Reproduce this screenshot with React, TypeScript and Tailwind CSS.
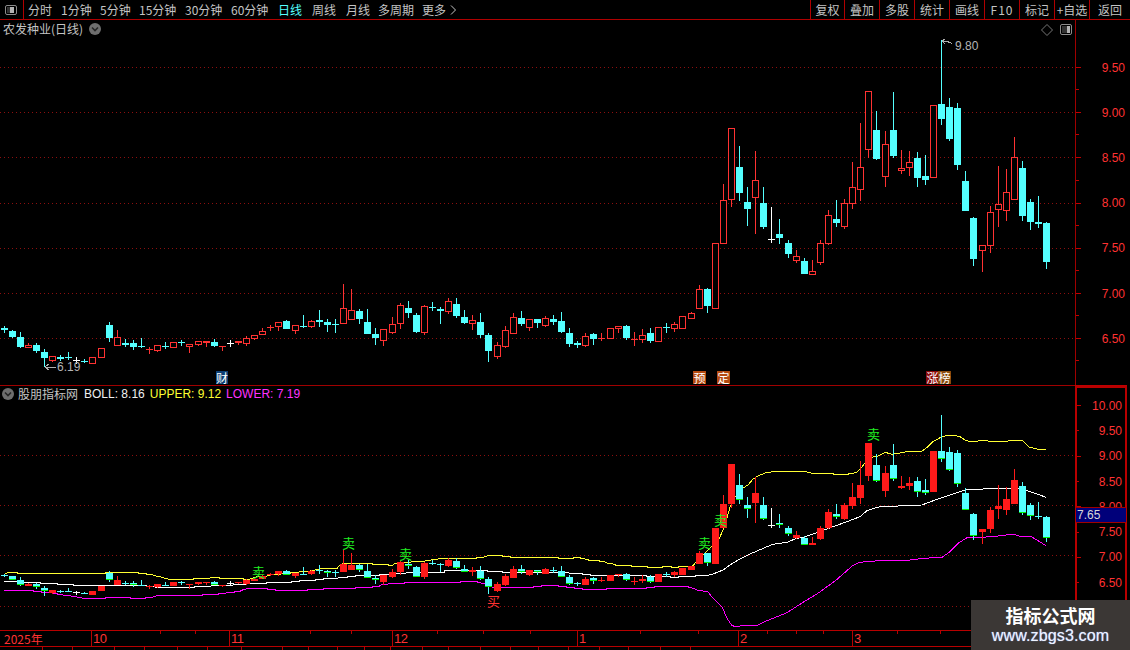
const CJK = "font-['Noto_Sans_CJK_SC','Liberation_Sans',sans-serif]";
const LAT = "font-['Liberation_Sans','Noto_Sans_CJK_SC',sans-serif]";

// x, kind (r red, c cyan, w white), bodyTop, bodyBottom, wickTop, wickBottom (pixels of the upper chart)
type C = [number, string, number, number, number, number];
const candles: C[] = [
  [4,'c',328,330,326,333],[12,'c',331,337,330,338],[20,'c',337,347,332,348],[28,'r',345,348,343,348],[36,'c',345,351,343,353],
  [44,'c',352,358,349,367],[52,'r',356,361,356,362],[60,'c',357,359,355,361],[68,'c',357,358,352,360],[76,'w',360,361,357,364],
  [84,'c',361,362,359,363],[92,'r',357,364,357,364],[101,'r',348,358,348,358],[109,'c',325,338,322,342],[117,'r',337,346,330,346],
  [125,'c',343,345,339,347],[133,'c',343,347,340,350],[141,'c',346,347,338,348],[149,'r',349,350,347,354],[157,'r',345,351,345,352],
  [165,'c',346,347,342,349],[173,'r',342,348,342,348],[181,'c',342,343,340,346],[189,'r',344,347,344,353],[198,'r',341,345,341,346],
  [206,'r',341,343,341,347],[214,'c',342,346,339,347],[222,'r',346,347,346,351],[230,'w',343,344,340,347],[238,'r',341,343,341,345],
  [246,'r',338,344,336,346],[254,'r',335,339,335,340],[262,'r',331,335,328,335],[270,'r',327,328,325,331],[278,'r',322,327,322,331],
  [286,'c',321,329,320,329],[295,'r',325,331,325,334],[303,'c',326,327,315,328],[311,'r',321,327,320,328],[319,'c',320,322,310,327],
  [327,'c',322,325,319,332],[335,'c',324,325,319,333],[343,'r',308,324,284,324],[351,'r',310,320,289,320],[359,'c',311,319,309,324],
  [367,'c',322,334,309,334],[375,'c',334,338,328,345],[383,'r',329,341,329,346],[392,'r',324,333,317,334],[400,'r',305,324,303,329],
  [408,'c',308,313,301,318],[416,'c',315,332,313,333],[424,'r',306,333,305,335],[432,'c',307,308,302,311],[440,'c',309,311,307,324],
  [448,'r',301,312,298,314],[456,'c',304,316,298,318],[464,'c',317,323,310,324],[472,'r',320,324,315,330],[480,'c',322,335,313,338],
  [488,'c',335,351,333,362],[497,'r',345,357,342,359],[505,'r',330,347,326,348],[513,'r',317,334,313,334],[521,'c',318,324,311,326],
  [529,'r',319,328,319,331],[537,'c',319,323,319,328],[545,'r',318,326,316,327],[553,'c',319,322,315,325],[561,'c',321,332,312,333],
  [569,'c',333,344,328,347],[577,'c',343,345,341,348],[585,'r',336,346,333,347],[593,'c',334,339,333,345],[601,'r',338,339,333,341],
  [610,'r',328,339,328,339],[618,'r',326,329,326,333],[626,'c',326,338,325,340],[634,'r',339,340,332,346],[642,'r',335,340,329,343],
  [650,'c',333,341,328,343],[658,'r',327,342,327,342],[666,'c',327,328,323,333],[674,'r',324,329,322,332],[682,'r',316,329,316,329],
  [691,'r',313,319,312,319],[699,'r',289,309,285,309],[707,'c',289,306,288,313],[715,'r',243,309,243,309],[723,'r',200,244,184,244],
  [731,'r',128,200,128,207],[739,'c',167,193,146,201],[747,'c',202,209,187,226],[755,'r',180,198,151,234],[763,'c',203,227,187,229],
  [771,'w',239,240,207,243],[779,'c',234,238,219,244],[788,'c',243,254,240,258],[796,'r',256,261,250,263],[804,'c',261,274,258,274],
  [812,'r',271,275,260,275],[820,'r',243,263,240,265],[828,'r',215,244,210,245],[836,'c',219,223,200,227],[844,'r',203,227,199,229],
  [852,'r',187,204,162,209],[860,'r',167,190,123,201],[868,'r',91,150,91,158],[876,'c',130,159,111,160],[885,'r',144,177,131,187],
  [893,'c',130,156,92,158],[901,'r',168,171,150,174],[909,'r',162,168,151,176],[917,'c',158,178,152,187],[925,'c',176,180,155,185],
  [933,'r',105,178,105,178],[941,'c',104,119,40,125],[949,'c',107,139,98,141],[957,'c',108,165,103,170],[965,'c',181,211,171,211],
  [973,'c',218,259,217,266],[982,'r',245,251,245,272],[990,'r',212,246,206,253],[998,'r',204,210,166,227],[1006,'r',192,211,169,221],
  [1014,'r',157,200,137,200],[1022,'c',168,216,161,221],[1030,'c',202,222,199,230],[1038,'c',222,224,196,228],[1046,'c',223,262,222,269],
];

const yellow = "5,574 8,572.5 17,572.5 17,573.5 105,573.5 105,572.5 138,572.5 138,573.5 146,573.5 146,574.5 152,574.5 156,576 160,576.5 164,578 170,579.5 193,579.5 194,578 210,578 211,577 219,577 219,578 243,578 243,579 250,579 258,576.5 267,576 273,574.5 290,573.5 291,572.5 307,571.5 315,570 323,568.5 337,568.5 340,565 343,563.3 372,563.3 372,564.3 388,564.3 388,565.3 393,565.3 395,563.3 403,562.3 420,561.7 427,560.7 436,559.3 444,558.3 476,558.3 476,557.3 484,557.3 485,556.3 493,555.3 502,555.3 503,556.3 510,556.3 511,557.3 558,557.3 558,558.3 573,558.3 573,557.3 580,557.3 581,558.3 584,558.3 585,559.3 590,560.3 599,560.3 600,561.3 605,562 608,563.3 615,564.3 615,565.3 631,565.3 631,566.3 647,566.3 647,567.3 662,567.3 662,566.3 671,566.3 671,567.3 678,567.3 678,566.3 692,566.3 695,563.3 698,560 719,539 723,530 727,518 730,507 735,497 743,488 748,485 753,479 758,476 765,473 777,471 800,471 807,472 811,473 833,473 833,474 848,474 848,473 854,473 857,472 862,467 865,463 873,457 877,456.7 885,452.3 892,454.3 898,453.3 907,451.7 922,451 928,446.7 933,441.7 940,437.7 948,435 953,435 960,436.7 965,440 970,441.7 978,441 987,440 988,441 1008,441 1010,440 1022,440 1030,447.7 1035,448.3 1038,449.3 1046,449.3";
const white = "4,581.3 16,581.3 17,582 33,582 33,582.7 40,582.7 41,583.3 57,583.3 57,584.3 73,584.3 73,585.3 146,585.3 146,586.7 163,587.3 194,587.3 194,586 211,586 218,585.3 233,585.3 234,584.3 243,584.3 250,583.7 266,583.7 267,582.3 291,582.3 291,581.3 299,581.3 299,580.3 315,580.3 315,579.3 323,579.3 323,578.3 338,578.3 339,577.3 347,577.3 347,576.3 355,576.3 355,575.3 379,575.3 379,574.3 389,574.3 403,573.3 413,572.3 444,572.3 444,570.3 453,570.3 502,571.3 502,572.3 558,572.3 574,573.3 582,573.3 582,574.3 590,574.3 590,575.3 670,576.3 670,577.3 678,577.3 678,576.3 695,576.3 695,575.3 708,575.3 713,574 723,570 730,565 737,560.7 750,554 767,546.7 773,544.3 787,542.3 795,539 805,536.7 820,531.7 833,526.7 847,521.7 860,516.7 867,510.7 877,507.5 883,506 890,506.7 907,505.3 922,505 928,502.7 940,498.3 950,495 957,492.7 965,490 973,489.3 1007,488.3 1020,488.3 1030,491.7 1037,494 1046,497.3";
const magenta = "4,590.3 33,590.3 33,591.3 41,591.3 41,592.3 57,593.3 57,594.3 65,595.3 73,596.3 79,597.3 83,598.3 105,598.3 105,597.3 130,597.3 131,598.3 145,598.3 145,597.3 153,597.3 154,596.3 161,595.3 202,595.3 202,594.3 218,594.3 218,593.3 226,593.3 227,592.3 234,592.3 234,591.3 240,591.3 244,589.3 250,588.3 267,588.3 267,589.3 275,589.3 276,590.3 307,590.3 307,589.3 323,589.3 323,588.3 355,588.3 355,587.3 372,587.3 372,586.3 379,586.3 379,585.3 387,584.3 390,583.3 404,583.3 404,582.3 460,582.3 460,581.3 477,581.3 477,582.3 483,583.3 493,587.3 533,587.3 533,586.3 541,586.3 541,585.3 558,585.3 558,586.3 566,586.3 566,587.3 574,587.3 574,588.3 582,588.3 582,589.3 606,589.3 606,588.3 646,588.3 646,587.3 654,587.3 654,586.3 686,586.3 693,588.3 698,590.3 708,591.7 713,598.3 722,606.7 727,618.3 732,625.7 737,626.7 743,625.3 757,625.3 767,620.7 787,612.7 803,602.3 820,592 837,579.3 853,565.3 860,562.3 870,561.3 880,560.7 888,561 910,560 923,558.3 942,557.3 950,551.7 958,543.3 967,537.7 980,537.3 993,536.7 1003,535.3 1013,534.3 1022,536.7 1032,537 1038,540.7 1046,545.7";

const RED = '#ff3232';
const CYAN = '#54ffff';
const toLower = (y: number) => Math.round(555.3 + (y - 293) * 0.554);

function Dots({ ys }: { ys: number[] }) {
  return (
    <g shapeRendering="auto">
      {ys.map((y) => (
        <line key={y} x1={0} x2={1075} y1={y + 0.5} y2={y + 0.5} stroke="#8c0f0f" strokeDasharray="1 3" />
      ))}
    </g>
  );
}

function UpperChart() {
  return (
    <svg width={1075} height={365} viewBox="0 20 1075 365" shapeRendering="crispEdges" className="block shrink-0">
      <Dots ys={[67, 112, 157, 203, 248, 293, 338]} />
      {candles.map(([x, k, t, b, wt, wb]) => {
        const col = k === 'r' ? RED : k === 'c' ? CYAN : '#ffffff';
        const flat = b - t <= 1;
        return (
          <g key={x}>
            <rect x={x} y={wt} width={1} height={wb - wt} fill={col} />
            {flat ? (
              <rect x={x - 3} y={t} width={7} height={1} fill={col} />
            ) : k === 'r' ? (
              <rect x={x - 2.5} y={t + 0.5} width={6} height={b - t - 1} fill="#000" stroke={col} />
            ) : (
              <rect x={x - 3} y={t} width={7} height={b - t} fill={col} />
            )}
          </g>
        );
      })}
      <polyline points="942,41 946,41 952,43.5" fill="none" stroke="#b0b0b0" />
      <polyline points="945,39 942,41 945,44" fill="none" stroke="#b0b0b0" />
      <polyline points="45,367 56,367" fill="none" stroke="#b0b0b0" />
      <polyline points="49,364 45,367 49,370" fill="none" stroke="#b0b0b0" />
    </svg>
  );
}

function LowerChart() {
  return (
    <svg width={1075} height={244} viewBox="0 386 1075 244" shapeRendering="crispEdges" className="block shrink-0">
      <Dots ys={[455, 505, 555, 606]} />
      <polyline points={yellow} fill="none" stroke="#ffff32" />
      <polyline points={white} fill="none" stroke="#ffffff" />
      <polyline points={magenta} fill="none" stroke="#ff00ff" />
      {candles.map(([x, k, t, b, wt, wb]) => {
        const col = k === 'r' ? '#ff1a1a' : k === 'c' ? CYAN : '#ffffff';
        const lt = toLower(t);
        const lb = Math.max(toLower(b), lt + 1);
        return (
          <g key={x}>
            <rect x={x} y={toLower(wt)} width={1} height={toLower(wb) - toLower(wt)} fill={col} />
            <rect x={x - 3} y={lt} width={7} height={lb - lt} fill={col} />
            {k === 'c' && lb - lt > 1 && <rect x={x - 3} y={lb - 1} width={7} height={1} fill="#00f000" />}
          </g>
        );
      })}
    </svg>
  );
}

function Round({ className = '' }: { className?: string }) {
  return (
    <svg width={12} height={12} viewBox="0 0 12 12" className={className}>
      <circle cx={6} cy={6} r={6} fill="#6e6e6e" />
      <polyline points="3,4.5 6,7.5 9,4.5" fill="none" stroke="#262626" strokeWidth={1.6} />
    </svg>
  );
}

function ToggleIcon({ left }: { left?: boolean }) {
  return (
    <svg width={12} height={left ? 10 : 11} viewBox={left ? '0 0 12 10' : '0 0 12 11'}>
      <rect x={0.5} y={0.5} width={11} height={left ? 9 : 10} rx={1.5} fill="#000" stroke="#8c8c8c" />
      <rect x={2} y={2} width={left ? 3 : 5} height={left ? 6 : 7} fill="#333" />
      <rect x={left ? 5 : 7} y={2} width={left ? 4 : 3} height={left ? 6 : 7} fill="#b4b4b4" />
    </svg>
  );
}

const leftTabs: [string, string][] = [
  ['分时', 'w-[33px]'], ['1分钟', 'w-[39px]'], ['5分钟', 'w-[39px]'], ['15分钟', 'w-[46px]'], ['30分钟', 'w-[46px]'],
  ['60分钟', 'w-[47px]'], ['日线', 'w-[34px]'], ['周线', 'w-[34px]'], ['月线', 'w-[32px]'], ['多周期', 'w-[44px]'],
];
const rightTabs: [string, string][] = [
  ['复权', 'w-[34px]'], ['叠加', 'w-[35px]'], ['多股', 'w-[35px]'], ['统计', 'w-[35px]'], ['画线', 'w-[35px]'],
  ['F10', 'w-[35px] tracking-[1px]'], ['标记', 'w-[35px]'], ['+自选', 'w-[35px]'], ['返回', 'w-[41px]'],
];

const upperAxis = ['9.50', '9.00', '8.50', '8.00', '7.50', '7.00', '6.50'];
const lowerAxis = ['10.00', '9.50', '9.00', '8.50', '8.00', '7.50', '7.00', '6.50'];

function UpperRow({ label }: { label: string }) {
  return (
    <div className="relative flex h-[45.2px] items-center">
      <span className="h-px w-[5px] bg-[#c00000]" />
      <span className={`ml-auto mr-[5px] text-[12px] leading-none text-[#ff3232] ${LAT}`}>{label}</span>
      <span className="absolute bottom-0 left-0 h-px w-[3px] bg-[#c00000]" />
    </div>
  );
}

function LowerRow({ label, major }: { label: string; major: boolean }) {
  return (
    <div className="flex h-[25.3px] items-center">
      <span className={`h-px bg-[#c00000] ${major ? 'w-[4px]' : 'w-[2px]'}`} />
      <span className={`ml-auto mr-[3px] text-[12px] leading-none text-[#ff3232] ${LAT}`}>{label}</span>
    </div>
  );
}

const months: [string, string][] = [
  ['2025年', 'w-[91px] pl-[4px]'], ['10', 'w-[138px] border-l border-[#b80000] pl-[1px]'], ['11', 'w-[163px] border-l border-[#b80000] pl-[1px]'],
  ['12', 'w-[185px] border-l border-[#b80000] pl-[1px]'], ['1', 'w-[161px] border-l border-[#b80000] pl-[1px]'],
  ['2', 'w-[114px] border-l border-[#b80000] pl-[1px]'], ['3', 'flex-1 border-l border-[#b80000] pl-[1px]'],
];
const footerCells = ['w-[43px]', 'w-[30px]', 'w-[42px]', 'w-[30px]', 'w-[33px]', 'w-[30px]', 'w-[34px]', 'w-[41px]', 'w-[26px]', 'w-[29px]', 'w-[27px]', 'w-[26px]', 'w-[32px]', 'w-[26px]', 'w-[32px]', 'w-[30px]', 'w-[28px]', 'w-[30px]', 'w-[31px]', 'w-[29px]', 'w-[32px]', 'w-[30px]'];

export default function App() {
  return (
    <div className={`relative flex h-[650px] w-[1130px] flex-col overflow-hidden bg-black ${CJK}`}>
      {/* toolbar */}
      <div className="flex h-[20px] shrink-0 items-stretch border-b border-[#b00000] text-[12px] leading-none text-[#c4c4c4]">
        <div className="flex w-[24px] items-center justify-center border-r border-[#b00000] pr-[1px]">
          <ToggleIcon left />
        </div>
        <div className="flex items-center pl-[4px]">
          {leftTabs.map(([t, w]) => (
            <span key={t} className={`${w} ${t === '日线' ? 'text-[#54ffff]' : ''}`}>{t}</span>
          ))}
          <span className="flex items-center">
            更多
            <svg width={7} height={10} viewBox="0 0 7 10" className="ml-[4px]">
              <polyline points="1,0.5 5.5,5 1,9.5" fill="none" stroke="#c4c4c4" />
            </svg>
          </span>
        </div>
        <div className="ml-auto flex">
          {rightTabs.map(([t, w]) => (
            <span key={t} className={`flex items-center justify-center border-l border-[#b00000] ${w}`}>{t}</span>
          ))}
        </div>
      </div>

      {/* upper panel */}
      <div className="relative flex h-[365px] shrink-0">
        <UpperChart />
        <div className="flex-1 border-l border-[#a00000] pt-[25px]">
          {upperAxis.map((l) => (
            <UpperRow key={l} label={l} />
          ))}
        </div>
        <div className="absolute left-[3px] top-[2px] flex items-center text-[12px] leading-[14px] text-[#c4c4c4]">
          农发种业(日线)
          <Round className="ml-[6px]" />
        </div>
        <svg width={12} height={12} viewBox="0 0 12 12" className="absolute left-[1041px] top-[4px]">
          <polygon points="6,0.5 11.5,6 6,11.5 0.5,6" fill="none" stroke="#777" />
        </svg>
        <div className="absolute left-[1060px] top-[4px]">
          <ToggleIcon />
        </div>
        <span className={`absolute left-[955px] top-[19px] text-[12px] leading-[14px] text-[#b4b4b4] ${LAT}`}>9.80</span>
        <span className={`absolute left-[57px] top-[340px] text-[12px] leading-[14px] text-[#b4b4b4] ${LAT}`}>6.19</span>
        <span className="absolute left-[216px] top-[351px] h-[13px] w-[12px] bg-[#0c3f75] text-center text-[12px] leading-[13px] text-white">财</span>
        <span className="absolute left-[693px] top-[351px] h-[13px] w-[13px] bg-[#b44a10] text-center text-[12px] leading-[13px] text-white">预</span>
        <span className="absolute left-[717px] top-[351px] h-[13px] w-[13px] bg-[#b44a10] text-center text-[12px] leading-[13px] text-white">定</span>
        <span className="absolute left-[926px] top-[351px] h-[13px] w-[13px] bg-[#8a0a0a] text-center text-[12px] leading-[13px] text-white">涨</span>
        <span className="absolute left-[938px] top-[351px] h-[13px] w-[13px] bg-[#8a4a0c] text-center text-[12px] leading-[13px] text-white">榜</span>
      </div>

      {/* divider */}
      <div className="flex h-px shrink-0">
        <div className="w-[1075px] bg-[#a00000]" />
        <div className="w-[52px] bg-[#c00000]" />
      </div>

      {/* lower panel */}
      <div className="relative flex h-[244px] shrink-0">
        <LowerChart />
        <div className="h-full w-[52px] border-x-2 border-t-2 border-[#b80000] pt-[5px]">
          {lowerAxis.map((l, i) => (
            <LowerRow key={l} label={l} major={i % 2 === 0} />
          ))}
        </div>
        <div className="absolute left-[2px] top-[1px] flex items-center text-[12px] leading-[14px]">
          <Round className="mr-[4px]" />
          <span className="text-[#c4c4c4]">股朋指标网</span>
          <span className={`ml-[6px] text-[#f0f0f0] ${LAT}`}>BOLL: 8.16</span>
          <span className={`ml-[5px] text-[#ffff32] ${LAT}`}>UPPER: 9.12</span>
          <span className={`ml-[5px] text-[#ff32ff] ${LAT}`}>LOWER: 7.19</span>
        </div>
        <span className="absolute left-[252px] top-[179px] text-[13px] leading-[13px] text-[#22f022]">卖</span>
        <span className="absolute left-[342px] top-[150px] text-[13px] leading-[13px] text-[#22f022]">卖</span>
        <span className="absolute left-[399px] top-[161px] text-[13px] leading-[13px] text-[#22f022]">卖</span>
        <span className="absolute left-[698px] top-[150px] text-[13px] leading-[13px] text-[#22f022]">卖</span>
        <span className="absolute left-[714px] top-[127px] text-[13px] leading-[13px] text-[#22f022]">卖</span>
        <span className="absolute left-[867px] top-[41px] text-[13px] leading-[13px] text-[#22f022]">卖</span>
        <span className="absolute left-[487px] top-[208px] text-[13px] leading-[13px] text-[#ff3232]">买</span>
        <span className={`absolute left-[1076px] top-[121px] h-[16px] w-[50px] border-y border-[#a00000] bg-[#00007a] pl-[1px] text-[12px] leading-[14px] text-[#d8d8d8] ${LAT}`}>7.65</span>
      </div>

      {/* time axis */}
      <div className={`relative flex h-[17px] shrink-0 border-y border-[#b80000] text-[13px] leading-[15px] tracking-[-0.5px] text-[#ff3232] ${LAT}`}>
        {months.map(([t, w]) => (
          <div key={t} className={w}>
            {t === '2025年' ? <span className={`tracking-normal text-[12px] ${CJK}`}>2025年</span> : t}
          </div>
        ))}
        <svg width={1075} height={3} className="absolute left-0 top-0">
          {[160, 195, 310, 351, 437, 483, 530, 640, 698, 767, 796, 823, 897, 940].map((x) => (
            <rect key={x} x={x} y={0} width={1} height={3} fill="#b80000" />
          ))}
        </svg>
      </div>

      {/* footer strip */}
      <div className="flex h-[3px] shrink-0 overflow-hidden">
        {footerCells.map((w, i) => (
          <div key={i} className={`${w} border-r border-[#b80000]`} />
        ))}
      </div>

      {/* watermark */}
      <div className="absolute bottom-0 right-0 flex h-[50px] w-[159px] flex-col items-center bg-[#3b3735] pt-[5px]">
        <span className="text-[18px] font-bold leading-[21px] text-white">指标公式网</span>
        <span className={`text-[16px] leading-[20px] tracking-[0.15px] text-[#eef3ff] [text-shadow:0_0_1px_#8fb0ff] ${LAT}`}>www.zbgs3.com</span>
      </div>
    </div>
  );
}
